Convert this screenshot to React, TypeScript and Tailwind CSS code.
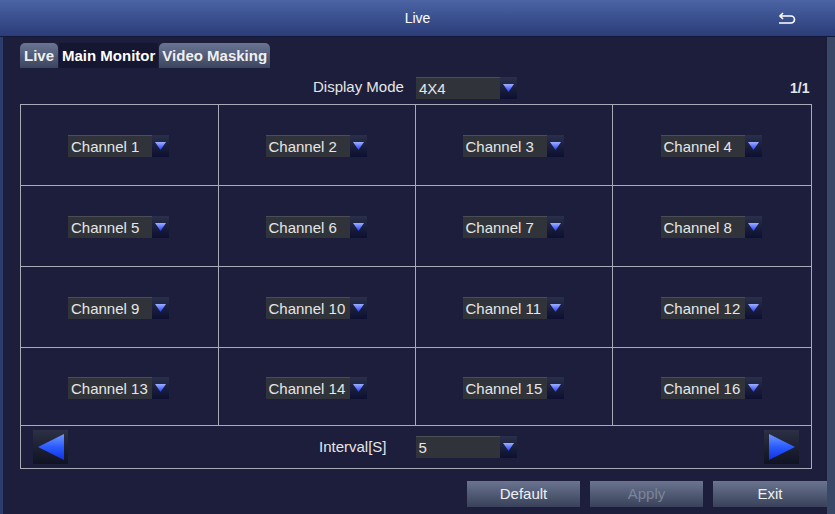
import React from 'react'

const font = { fontFamily: '"Liberation Sans", Arial, sans-serif' }

function Arrow() {
  return (
    <div className="w-[17px] h-[22px] bg-gradient-to-b from-[#2a2f4a] to-[#0d1030] flex items-center justify-center">
      <svg width="11" height="8" viewBox="0 0 11 8">
        <defs>
          <linearGradient id="ag" x1="0" y1="0" x2="0" y2="1">
            <stop offset="0" stopColor="#9fb0ff" />
            <stop offset="1" stopColor="#1f3cff" />
          </linearGradient>
        </defs>
        <polygon points="0,0 11,0 5.5,8" fill="url(#ag)" />
      </svg>
    </div>
  )
}

function Select({ value, w = 84 }: { value: string; w?: number }) {
  return (
    <div className="flex items-center h-[22px]">
      <div
        className="h-[22px] bg-[#30343a] border-t border-[#4a4e55] text-[#e6e6e6] text-[15px] leading-[21px] pl-[3px] whitespace-nowrap overflow-hidden"
        style={{ width: w }}
      >
        {value}
      </div>
      <Arrow />
    </div>
  )
}

function NavBtn({ dir }: { dir: 'l' | 'r' }) {
  return (
    <div className="w-[35px] h-[34px] bg-gradient-to-b from-[#2c3044] to-[#101322] flex items-center justify-center">
      <svg width="28" height="28" viewBox="0 0 28 28">
        <defs>
          <linearGradient id={'ng' + dir} x1="0" y1="0" x2="0" y2="1">
            <stop offset="0" stopColor="#6f96ff" />
            <stop offset="0.5" stopColor="#2a5cff" />
            <stop offset="1" stopColor="#1230e0" />
          </linearGradient>
        </defs>
        {dir === 'l' ? (
          <polygon points="27,1 27,27 1,14" fill={'url(#ng' + dir + ')'} />
        ) : (
          <polygon points="1,1 1,27 27,14" fill={'url(#ng' + dir + ')'} />
        )}
      </svg>
    </div>
  )
}

export default function App() {
  const channels = Array.from({ length: 16 }, (_, i) => `Channel ${i + 1}`)

  return (
    <div className="w-[835px] h-[514px] bg-[#1d1e3b] flex flex-col overflow-hidden" style={font}>
      {/* Header */}
      <div className="h-[37px] bg-gradient-to-b from-[#4c64a4] to-[#2a3d78] border-b border-[#14183a] relative flex items-center justify-center shrink-0">
        <span className="text-white text-[14px]">Live</span>
        <svg className="absolute left-[778px] top-[11px]" width="18" height="14" viewBox="0 0 18 14" fill="none" stroke="white" strokeWidth="1.6">
          <path d="M1 12 H13 a3.5 3.5 0 0 0 0 -7 H2" />
          <path d="M5 2 L2 5 L5 8" />
        </svg>
      </div>

      <div className="flex flex-1">
        <div className="w-[3px] bg-[#2c3c6c]" />
        <div className="flex-1 flex flex-col">
          {/* Tabs */}
          <div className="flex items-end pl-[17px] pt-[6px] h-[31px] font-bold text-[15px]">
            <div className="h-[25px] px-[4px] rounded-t-[5px] bg-gradient-to-b from-[#6a7592] to-[#3c4560] text-[#f0f0f0] leading-[26px]">Live</div>
            <div className="h-[25px] px-[3px] bg-[#151630] text-white leading-[26px] ml-px">Main Monitor</div>
            <div className="h-[25px] px-[3px] rounded-t-[5px] bg-gradient-to-b from-[#6a7592] to-[#3c4560] text-[#f0f0f0] leading-[26px] ml-px">Video Masking</div>
          </div>

          {/* Display mode row */}
          <div className="h-[36px] flex items-center relative pt-[3px]">
            <div className="flex items-center ml-[310px]">
              <span className="text-[#e6e6e6] text-[15px] mr-[12px]">Display Mode</span>
              <Select value="4X4" />
            </div>
            <span className="absolute left-[787px] top-[10px] text-[#e6e6e6] text-[14px] font-bold">1/1</span>
          </div>

          {/* Grid */}
          <div className="ml-[17px] w-[792px] border border-[#a9a9b8]">
            <div className="grid grid-cols-[198px_197px_197px_1fr]">
              {channels.map((c, i) => (
                <div
                  key={c}
                  className={
                    'flex items-center justify-center border-[#a9a9b8] ' +
                    (i % 4 !== 3 ? 'border-r ' : '') +
                    (i < 12 ? 'border-b h-[81px]' : 'h-[77px]')
                  }
                >
                  <div className="mt-[2px] mr-[2px]">
                    <Select value={c} />
                  </div>
                </div>
              ))}
            </div>
            <div className="h-[43px] border-t border-[#a9a9b8] flex items-center px-[12px]">
              <NavBtn dir="l" />
              <div className="flex-1 flex items-center">
                <span className="text-[#e6e6e6] text-[15px] ml-[251px] mr-[29px]">Interval[S]</span>
                <Select value="5" />
              </div>
              <NavBtn dir="r" />
            </div>
          </div>

          {/* Buttons */}
          <div className="flex justify-end gap-[10px] mt-[12px]">
            <div className="w-[113px] h-[26px] bg-gradient-to-b from-[#6b7590] to-[#3a425a] text-[#f0f0f0] text-[15px] flex items-center justify-center">Default</div>
            <div className="w-[113px] h-[26px] bg-gradient-to-b from-[#6b7590] to-[#3a425a] text-[#7d8499] text-[15px] flex items-center justify-center">Apply</div>
            <div className="w-[114px] h-[26px] bg-gradient-to-b from-[#6b7590] to-[#3a425a] text-[#f0f0f0] text-[15px] flex items-center justify-center">Exit</div>
          </div>
        </div>
        <div className="w-[8px] bg-[#3a4868]" />
      </div>
    </div>
  )
}
